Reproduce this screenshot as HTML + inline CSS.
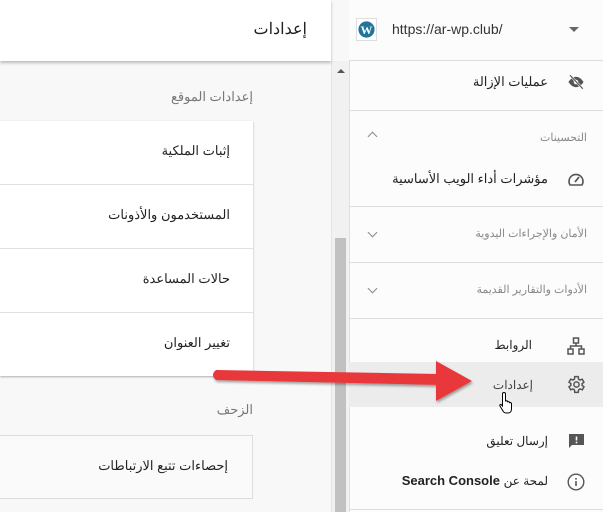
<!DOCTYPE html>
<html><head><meta charset="utf-8"><style>
*{margin:0;padding:0;box-sizing:border-box}
body{width:603px;height:512px;overflow:hidden;background:#f8f8f8;font-family:"Liberation Sans","Noto Sans CJK SC",sans-serif;position:relative;direction:ltr}
.abs{position:absolute}
.t{position:absolute;direction:rtl;white-space:nowrap}
</style></head><body>
<div class="abs" style="left:0;top:0;width:331px;height:61px;background:#fff;box-shadow:0 2px 3px rgba(0,0,0,.25);z-index:2"></div>
<div class="t" style="right:296px;top:19px;font-size:16px;color:#222;z-index:3">إعدادات</div>
<div class="t" style="right:350px;top:89px;font-size:13px;color:#777">إعدادات الموقع</div>
<div class="abs" style="left:0;top:121px;width:253px;height:255px;background:#fff;box-shadow:0 1px 2px rgba(0,0,0,.3)"></div>
<div class="abs" style="left:0;top:184px;width:253px;height:1px;background:#e0e0e0"></div>
<div class="abs" style="left:0;top:248px;width:253px;height:1px;background:#e0e0e0"></div>
<div class="abs" style="left:0;top:312px;width:253px;height:1px;background:#e0e0e0"></div>
<div class="t" style="right:373px;top:143px;font-size:13px;color:#222">إثبات الملكية</div>
<div class="t" style="right:373px;top:207px;font-size:13px;color:#222">المستخدمون والأذونات</div>
<div class="t" style="right:373px;top:271px;font-size:13px;color:#222">حالات المساعدة</div>
<div class="t" style="right:373px;top:335px;font-size:13px;color:#222">تغيير العنوان</div>
<div class="t" style="right:350px;top:402px;font-size:13px;color:#777">الزحف</div>
<div class="abs" style="left:-1px;top:435px;width:254px;height:64px;background:#fafafa;border:1px solid #ddd"></div>
<div class="t" style="right:375px;top:458px;font-size:13px;color:#222">إحصاءات تتبع الارتباطات</div>
<div class="abs" style="left:331px;top:61px;width:18px;height:451px;background:#f1f1f1;border-left:1px solid #e4e4e4"></div>
<div class="abs" style="left:335px;top:238px;width:11px;height:274px;background:#c1c1c1"></div>
<div class="abs" style="left:337px;top:69px;width:0;height:0;border-left:4px solid transparent;border-right:4px solid transparent;border-bottom:4px solid #555"></div>
<div class="abs" style="left:349px;top:0;width:254px;height:512px;background:#fcfcfc;border-left:1px solid #e0e0e0"></div>
<div class="abs" style="left:349px;top:0;width:254px;height:61px;background:#fcfcfc;border-bottom:1px solid #ddd"></div>
<div class="abs" style="left:356px;top:18px;width:21px;height:23px;background:#fff;border:1px solid #ddd"></div>
<svg class="abs" style="left:358px;top:21px" width="17" height="17" viewBox="0 0 20 20"><circle cx="10" cy="10" r="9.5" fill="#21759b"/><text x="10" y="15" font-size="14" font-weight="bold" fill="#fff" text-anchor="middle" font-family="Liberation Serif">W</text></svg>
<div class="abs" style="left:392px;top:21px;font-size:14px;color:#333">https://ar-wp.club/</div>
<div class="abs" style="left:569px;top:27px;border-left:5px solid transparent;border-right:5px solid transparent;border-top:5px solid #666"></div>
<svg class="abs" style="left:567px;top:74px" width="18" height="16" viewBox="0 0 24 20"><path d="M12 3C6 3 2 10 2 10s4 7 10 7 10-7 10-7-4-7-10-7z" fill="#555"/><circle cx="12" cy="10" r="3" fill="#fcfcfc"/><path d="M4 1l17 18" stroke="#fcfcfc" stroke-width="3"/><path d="M4 1l17 18" stroke="#555" stroke-width="1.6"/></svg>
<div class="t" style="right:55px;top:74px;font-size:13px;color:#222">عمليات الإزالة</div>
<div class="abs" style="left:349px;top:110px;width:254px;height:1px;background:#ddd"></div>
<div class="t" style="right:16px;top:131px;font-size:11px;color:#888">التحسينات</div>
<div class="abs" style="left:369px;top:133px;width:7px;height:7px;border-left:1.3px solid #888;border-top:1.3px solid #888;transform:rotate(45deg)"></div>
<svg class="abs" style="left:567px;top:171px" width="18" height="16" viewBox="0 0 18 16"><path d="M3 14A7 7 0 1 1 15 14Z" fill="none" stroke="#555" stroke-width="1.6"/><path d="M8 11l4-5" stroke="#555" stroke-width="1.8"/></svg>
<div class="t" style="right:55px;top:171px;font-size:13px;color:#222">مؤشرات أداء الويب الأساسية</div>
<div class="abs" style="left:349px;top:206px;width:254px;height:1px;background:#ddd"></div>
<div class="t" style="right:16px;top:227px;font-size:11px;color:#888">الأمان والإجراءات اليدوية</div>
<div class="abs" style="left:369px;top:229px;width:7px;height:7px;border-right:1.3px solid #888;border-bottom:1.3px solid #888;transform:rotate(45deg)"></div>
<div class="abs" style="left:349px;top:262px;width:254px;height:1px;background:#ddd"></div>
<div class="t" style="right:16px;top:283px;font-size:11px;color:#888">الأدوات والتقارير القديمة</div>
<div class="abs" style="left:369px;top:285px;width:7px;height:7px;border-right:1.3px solid #888;border-bottom:1.3px solid #888;transform:rotate(45deg)"></div>
<div class="abs" style="left:349px;top:318px;width:254px;height:1px;background:#ddd"></div>
<svg class="abs" style="left:567px;top:337px" width="18" height="18" viewBox="0 0 18 18" fill="none" stroke="#555" stroke-width="1.5"><rect x="6.5" y="1" width="5" height="5"/><rect x="1" y="12" width="5" height="5"/><rect x="12" y="12" width="5" height="5"/><path d="M9 6v3M3.5 12V9h11v3"/></svg>
<div class="t" style="right:71px;top:338px;font-size:12px;color:#222">الروابط</div>
<div class="abs" style="left:349px;top:362px;width:254px;height:45px;background:#ececec"></div>
<svg class="abs" style="left:566px;top:374px" width="21" height="21" viewBox="0 0 24 24"><path fill="none" stroke="#555" stroke-width="1.7" d="M19.4 13a7.5 7.5 0 0 0 0-2l2.1-1.6-2-3.5-2.5 1a7 7 0 0 0-1.7-1L15 3h-4l-.4 2.9a7 7 0 0 0-1.7 1l-2.5-1-2 3.5L6.6 11a7.5 7.5 0 0 0 0 2l-2.2 1.6 2 3.5 2.5-1a7 7 0 0 0 1.7 1L11 21h4l.4-2.9a7 7 0 0 0 1.7-1l2.5 1 2-3.5z" transform="translate(-1 0)"/><circle cx="12" cy="12" r="3" fill="none" stroke="#555" stroke-width="1.7"/></svg>
<div class="t" style="right:70px;top:378px;font-size:12px;color:#444">إعدادات</div>
<svg class="abs" style="left:568px;top:433px" width="17" height="17" viewBox="0 0 17 17"><path d="M1 1h15v11H4l-3 3z" fill="#555"/><rect x="7.7" y="3.5" width="1.6" height="4" fill="#fcfcfc"/><rect x="7.7" y="8.7" width="1.6" height="1.6" fill="#fcfcfc"/></svg>
<div class="t" style="right:55px;top:434px;font-size:12px;color:#222">إرسال تعليق</div>
<svg class="abs" style="left:567px;top:473px" width="18" height="18" viewBox="0 0 18 18"><circle cx="9" cy="9" r="7.8" fill="none" stroke="#555" stroke-width="1.4"/><rect x="8.2" y="8" width="1.6" height="5" fill="#555"/><rect x="8.2" y="5" width="1.6" height="1.6" fill="#555"/></svg>
<div class="t" style="right:55px;top:473px;font-size:13px;color:#222"><span style="font-size:12px">لمحة عن</span> <b style="font-weight:bold;color:#222">Search Console</b></div>
<div class="abs" style="left:349px;top:509px;width:254px;height:1px;background:#ddd"></div>
<svg class="abs" style="left:0;top:0;z-index:5" width="603" height="512"><defs><filter id="s"><feDropShadow dx="1" dy="2" stdDeviation="1.2" flood-opacity=".35"/></filter></defs><g filter="url(#s)" fill="#e8393b"><path d="M216 370L440 374L440 385L216 380Q210 375 216 370Z"/><path d="M436 361L472 381L436 401Z"/></g></svg>
<svg class="abs" style="left:498px;top:391px;z-index:6" width="20" height="24" viewBox="0 0 20 24"><path d="M6 1.5c1 0 1.5.6 1.5 1.5v7l1-.2c.8 0 1.2.5 1.2 1l.6-.2c.8 0 1.2.5 1.2 1l.5-.1c.9 0 1.5.6 1.5 1.4V18c0 2-1 4-3 4H8c-1.5 0-2.5-1-3.2-2.2L2 15c-.5-1 .3-1.8 1.2-1.5L4.5 15V3c0-1 .6-1.5 1.5-1.5z" fill="#fff" stroke="#000" stroke-width="1"/></svg>
</body></html>
